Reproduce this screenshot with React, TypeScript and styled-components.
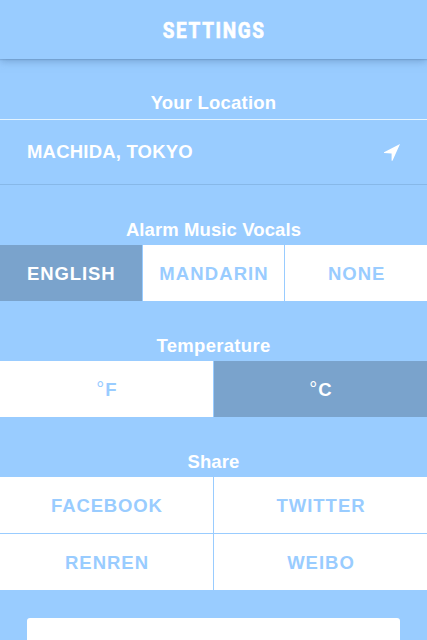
import React from 'react';
import styled, { createGlobalStyle } from 'styled-components';

const Global = createGlobalStyle`
  * { box-sizing: border-box; }
  html, body { margin: 0; background: #99ccff; }
  body { overflow: hidden; }
`;

const Screen = styled.main`
  display: flex;
  flex-direction: column;
  width: 427px;
  height: 640px;
  overflow: hidden;
  background: #99ccff;
  color: #fff;
  font-family: "Liberation Sans", Arial, sans-serif;
  font-weight: 700;
`;

const Header = styled.header`
  flex: none;
  display: flex;
  justify-content: center;
  height: 59px;
  padding-top: 17px;
  box-shadow: 0 1px 1px rgba(80, 120, 165, 0.25), 0 2px 8px rgba(80, 120, 165, 0.5);
`;

const Title = styled.h1`
  margin: 0 -1px 0 0;
  font: 700 22.5px/27px Roboto, sans-serif;
  letter-spacing: 2px;
  transform: scaleX(0.84);
  -webkit-text-stroke: 0.7px #fff;
`;

const Section = styled.section`
  flex: none;
  margin-top: 34px;
`;

const Heading = styled.h2<{ $space?: number; $line?: number }>`
  margin: 0;
  height: 26px;
  font-size: 18.5px;
  line-height: ${(p) => p.$line ?? 21}px;
  text-align: center;
  letter-spacing: ${(p) => p.$space ?? 0.1}px;
`;

const LocationRow = styled.div`
  display: flex;
  align-items: center;
  justify-content: space-between;
  height: 66px;
  padding: 0 27px;
  border-top: 1px solid #e3f3ff;
  border-bottom: 1px solid #87b8e8;
  font-size: 18.5px;
  letter-spacing: 0.2px;
`;

const Options = styled.div<{ $columns: number }>`
  display: grid;
  grid-template-columns: repeat(${(p) => p.$columns}, 1fr);
  grid-auto-rows: 56px;
  gap: 1px;
`;

const Option = styled.button<{ $active?: boolean; $space?: number }>`
  border: 0;
  padding: 1px 0 0;
  background: ${(p) => (p.$active ? '#7aa3cc' : '#fff')};
  color: ${(p) => (p.$active ? '#fff' : '#99ccff')};
  font: inherit;
  font-size: 18.5px;
  letter-spacing: ${(p) => p.$space ?? 1}px;
  text-indent: ${(p) => p.$space ?? 1}px;
`;

const Degree = styled.span`
  font-size: 20px;
  font-weight: 400;
  line-height: 1;
  letter-spacing: 1px;
`;

const Panel = styled.div`
  flex: none;
  height: 60px;
  margin: 28px 27px 0;
  border-radius: 3px;
  background: #fff;
`;

export default function App() {
  return (
    <Screen>
      <Global />
      <Header><Title>SETTINGS</Title></Header>
      <Section>
        <Heading $space={0.2} $line={19}>Your Location</Heading>
        <LocationRow>
          <span>MACHIDA, TOKYO</span>
          <svg width="16" height="17" viewBox="0 0 16 17" fill="#fff" aria-hidden="true">
            <path d="M16 0 8.5 16.8H7.6V9.4L0 9.1V8.3Z" />
          </svg>
        </LocationRow>
      </Section>
      <Section>
        <Heading>Alarm Music Vocals</Heading>
        <Options $columns={3}>
          <Option $active $space={0.9}>ENGLISH</Option>
          <Option $space={1.1}>MANDARIN</Option>
          <Option>NONE</Option>
        </Options>
      </Section>
      <Section>
        <Heading $space={0.3}>Temperature</Heading>
        <Options $columns={2}>
          <Option><Degree>°</Degree>F</Option>
          <Option $active><Degree>°</Degree>C</Option>
        </Options>
      </Section>
      <Section>
        <Heading>Share</Heading>
        <Options $columns={2}>
          <Option $space={0.85}>FACEBOOK</Option>
          <Option>TWITTER</Option>
          <Option>RENREN</Option>
          <Option>WEIBO</Option>
        </Options>
      </Section>
      <Panel />
    </Screen>
  );
}
